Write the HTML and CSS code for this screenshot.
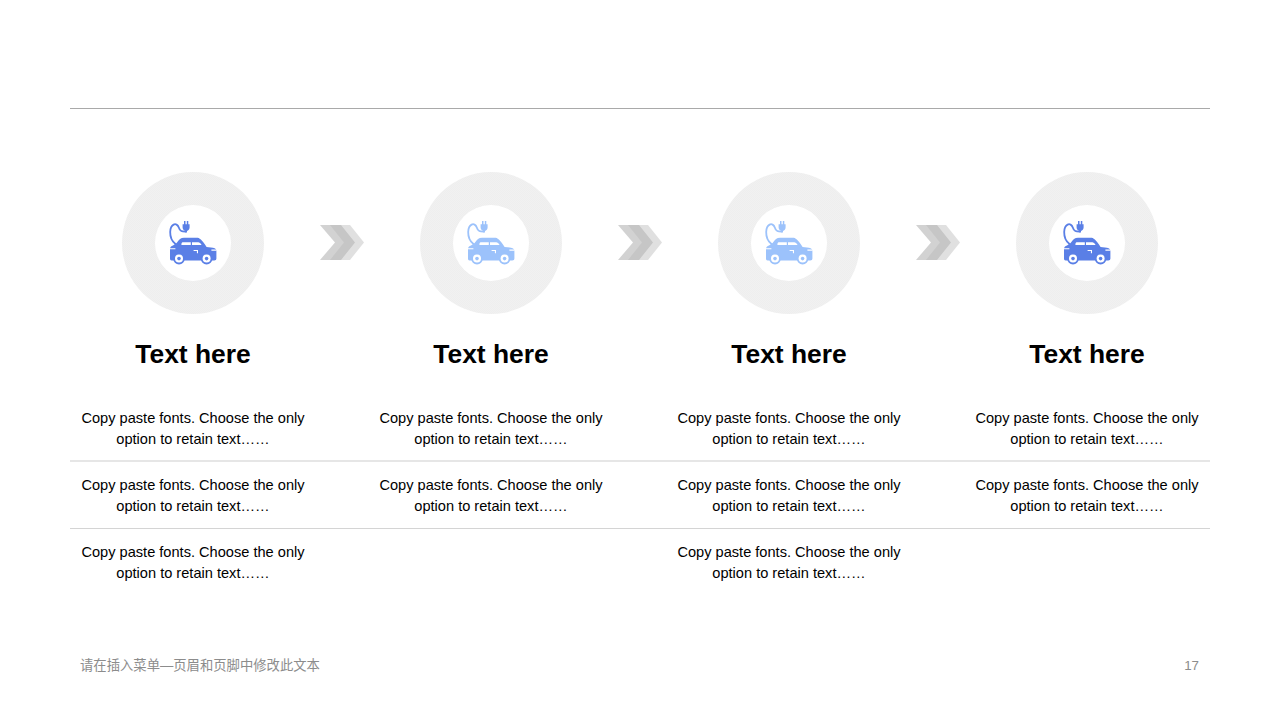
FILE: index.html
```html
<!DOCTYPE html>
<html lang="en">
<head>
<meta charset="utf-8">
<title>Text here</title>
<link rel="stylesheet" href="styles.css">
</head>
<body>
<svg class="defs" width="0" height="0" aria-hidden="true">
  <symbol id="car" viewBox="0 0 48 46">
    <path fill="none" stroke="currentColor" stroke-width="1.8" stroke-linecap="round" d="M16.5 11.6C13 11.6 11 11.5 9.8 7.5C8.8 4.6 6.5 3.6 4.6 4.6C2.2 5.8 1.3 8.5 1.2 12C1.1 17 2.5 21 6.5 24"/>
    <path fill="currentColor" d="M13.6 4.2H15V1H16.5V4.2H17.8V1H19.3V4.2H20.6V7.6C20.6 9.4 19.3 10.6 18 10.9V12.4H16.3V10.9C15 10.6 13.6 9.4 13.6 7.6z"/>
    <path fill="currentColor" d="M1 29.5C1 27 2.2 26.2 4 25.6L7.6 23C10 19.4 11.8 17.7 15 17.7H27.5C30.6 17.7 32.6 19.2 37.6 26.9L44 27.7C46.6 28.2 47.4 29.4 47.4 31.4V38.4C47.4 39.6 46.6 40.4 45.2 40.4H2.6C1.5 40.4 1 39.6 1 38.4z"/>
    <path fill="#fff" d="M13.6 22.2H21.8V24.9H12.4C12.4 23.3 12.8 22.2 13.6 22.2zM23 22.2H29.2C30.4 22.2 31.6 23.2 32.6 24.9H23z"/>
    <path fill="#fff" d="M1 28.2H6.4V29.3H1zM42.4 29.6H47.4V30.7H42.4zM24.6 30H29V33.2H27.9V31H24.6z"/>
    <circle cx="10" cy="38.6" r="5.8" fill="currentColor"/>
    <circle cx="10" cy="38.6" r="4" fill="#fff"/>
    <circle cx="10" cy="38.6" r="1.8" fill="currentColor"/>
    <circle cx="37.6" cy="38.6" r="5.8" fill="currentColor"/>
    <circle cx="37.6" cy="38.6" r="4" fill="#fff"/>
    <circle cx="37.6" cy="38.6" r="1.8" fill="currentColor"/>
  </symbol>
  <symbol id="chev" viewBox="0 0 44 35">
    <path fill="#a8a8a8" opacity=".52" d="M0 0H21L35 17.5L21 35H0L15 17.5z"/>
    <path fill="#b4b4b4" opacity=".42" d="M10 0H30L44 17.5L30 35H10L24 17.5z"/>
  </symbol>
</svg>
<main class="slide">
  <div class="rule"></div>
  <section class="stage">
    <div class="ring"><div class="hole dark"><svg class="car"><use href="#car"/></svg></div></div>
    <svg class="chev"><use href="#chev"/></svg>
    <div class="ring"><div class="hole light"><svg class="car"><use href="#car"/></svg></div></div>
    <svg class="chev"><use href="#chev"/></svg>
    <div class="ring"><div class="hole light"><svg class="car"><use href="#car"/></svg></div></div>
    <svg class="chev"><use href="#chev"/></svg>
    <div class="ring"><div class="hole dark"><svg class="car"><use href="#car"/></svg></div></div>
  </section>
  <section class="titles">
    <h2>Text here</h2><h2>Text here</h2><h2>Text here</h2><h2>Text here</h2>
  </section>
  <section class="rows">
    <div class="row">
      <p>Copy paste fonts. Choose the only<br>option to retain text……</p>
      <p>Copy paste fonts. Choose the only<br>option to retain text……</p>
      <p>Copy paste fonts. Choose the only<br>option to retain text……</p>
      <p>Copy paste fonts. Choose the only<br>option to retain text……</p>
    </div>
    <div class="row">
      <p>Copy paste fonts. Choose the only<br>option to retain text……</p>
      <p>Copy paste fonts. Choose the only<br>option to retain text……</p>
      <p>Copy paste fonts. Choose the only<br>option to retain text……</p>
      <p>Copy paste fonts. Choose the only<br>option to retain text……</p>
    </div>
    <div class="row">
      <p>Copy paste fonts. Choose the only<br>option to retain text……</p>
      <p></p>
      <p>Copy paste fonts. Choose the only<br>option to retain text……</p>
      <p></p>
    </div>
  </section>
  <footer class="foot">
    <span>请在插入菜单—页眉和页脚中修改此文本</span>
    <span>17</span>
  </footer>
</main>
</body>
</html>
```
FILE: styles.css
```css
* { box-sizing: border-box; }
html, body { margin: 0; padding: 0; background: #fff; }
.defs { display: block; height: 0; }
.slide {
  width: 1280px;
  height: 720px;
  padding-top: 108px;
  overflow: hidden;
  font-family: "Liberation Sans", "Noto Sans CJK SC", sans-serif;
  color: #000;
}
.rule { height: 1px; margin: 0 70px; background: #a9a9a9; }
.stage {
  display: flex;
  align-items: center;
  margin-top: 63px;
  padding-left: 122px;
}
.ring {
  width: 142px;
  height: 142px;
  flex: none;
  display: flex;
  align-items: center;
  justify-content: center;
  border-radius: 50%;
  background: repeating-conic-gradient(#f1f1f1 0 25%, #eeeeee 0 50%) 0 0 / 2px 2px;
}
.hole {
  width: 76px;
  height: 76px;
  display: flex;
  align-items: center;
  justify-content: center;
  border-radius: 50%;
  background: #fff;
}
.dark { color: #5a7fe6; }
.light { color: #9cc2fb; }
.car { width: 48px; height: 46px; display: block; }
.chev { width: 44px; height: 35px; flex: none; margin: 0 56px 2px 56px; display: block; }
.titles, .row {
  display: grid;
  grid-template-columns: repeat(4, 246px);
  column-gap: 52px;
}
.titles { margin: 24px 70px 0; }
.titles h2 {
  margin: 0;
  text-align: center;
  font-size: 26.4px;
  line-height: 32px;
  font-weight: 700;
}
.rows { margin: 25px 70px 0; }
.row {
  height: 67px;
  padding-top: 13px;
  border-bottom: 1px solid #d4d4d4;
}
.row:first-child { border-bottom: 2px solid #e6e6e6; }
.row:last-child { border-bottom: 0; }
.row p {
  margin: 0;
  text-align: center;
  font-size: 14.6px;
  line-height: 21px;
}
.foot {
  display: flex;
  justify-content: space-between;
  margin: 61px 81px 0 80px;
  font-size: 13.33px;
  line-height: 18px;
  color: #8c8c8c;
}
```
